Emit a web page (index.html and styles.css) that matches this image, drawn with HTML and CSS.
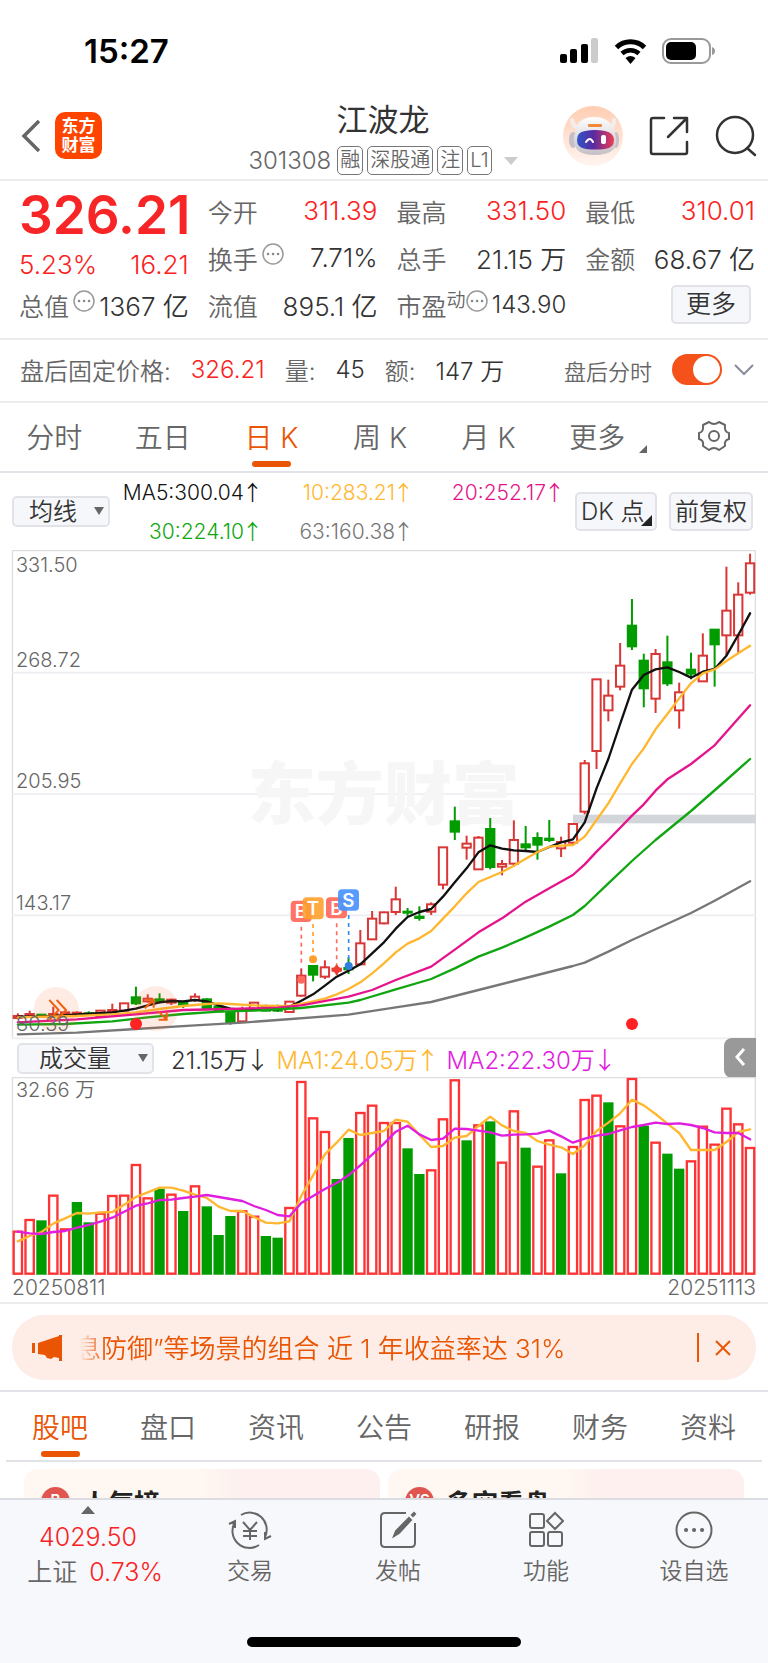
FILE: index.html
```html
<!DOCTYPE html>
<html lang="zh-CN">
<head>
    <meta charset="UTF-8">
    <meta name="viewport" content="width=device-width, initial-scale=1.0">
    <title>江波龙 301308</title>
    <link rel="stylesheet" href="styles.css">
</head>
<body>

    <!-- Status bar -->
    <div class="status-bar">
        <span class="status-time">15:27</span>
        <div class="status-icons">
            <svg width="39" height="26" viewBox="0 0 39 26">
                <rect x="0" y="16" width="7" height="9" rx="2"/>
                <rect x="10" y="11" width="7" height="14" rx="2"/>
                <rect x="21" y="6" width="7" height="19" rx="2"/>
                <rect x="31" y="0" width="7" height="25" rx="2" fill="#ccc"/>
            </svg>
            <svg width="33" height="25" viewBox="0 0 33 25">
                <path d="M2.500 8.500a20 20 0 0 1 28 0" fill="none" stroke="#000" stroke-width="5"/>
                <path d="M8 14.500a12.500 12.500 0 0 1 17 0" fill="none" stroke="#000" stroke-width="4.500"/>
                <path d="M11.500 19q5-4 10 0l-5 6z"/>
            </svg>
            <svg width="54" height="26" viewBox="0 0 54 26">
                <rect x="1" y="1" width="47" height="24" rx="8" fill="none" stroke="#999" stroke-width="2"/>
                <rect x="4" y="4" width="30" height="18" rx="5"/>
                <path d="M50 9q3 1 3 4t-3 4z" fill="#999"/>
            </svg>
        </div>
    </div>

    <!-- Header -->
    <header class="header">
        <div class="header-left">
            <button class="icon-btn" aria-label="返回">
                <svg width="20" height="34" viewBox="0 0 20 34"><path d="M18 2L3 17l15 15" fill="none" stroke="#666" stroke-width="3.500"/></svg>
            </button>
            <a href="#" class="logo"><span>东方</span><span>财富</span></a>
        </div>
        <div class="header-title">
            <h1>江波龙</h1>
            <div class="stock-meta">
                <span class="stock-code">301308</span>
                <span class="tag">融</span>
                <span class="tag">深股通</span>
                <span class="tag">注</span>
                <span class="tag">L1</span>
                <i class="caret"></i>
            </div>
        </div>
        <div class="header-right">
            <button class="icon-btn" aria-label="智能助手">
                <svg width="60" height="60" viewBox="0 0 60 60">
                    <defs>
                        <linearGradient id="halo" x1="0" y1="0" x2="0" y2="1"><stop offset="0" stop-color="#ffcdb2"/><stop offset="1" stop-color="#fff5f0"/></linearGradient>
                        <linearGradient id="visor" x1="0" y1="0" x2="1" y2="0"><stop offset="0" stop-color="#2f55c8"/><stop offset=".45" stop-color="#5b2aa0"/><stop offset="1" stop-color="#ee3d53"/></linearGradient>
                        <linearGradient id="shell" x1="0" y1="0" x2="0" y2="1"><stop offset="0" stop-color="#fff"/><stop offset="1" stop-color="#c4bfc5"/></linearGradient>
                    </defs>
                    <circle cx="30" cy="30" r="30" fill="url(#halo)"/>
                    <path d="M9 14q1 7 7 8M51 14q0 7-5 9" fill="none" stroke="#f3eeee" stroke-width="4" stroke-linecap="round"/>
                    <ellipse cx="10" cy="34" rx="4" ry="8" fill="#c5c0c8"/>
                    <ellipse cx="53" cy="34" rx="3" ry="8" fill="#c5c0c8"/>
                    <path d="M12 27q2-16 19-16t21 16q3 10-1 16-6 6-20 6t-18-7q-4-7-1-15z" fill="url(#shell)"/>
                    <path d="M22 25q10-2 20 0 9 2 9 9 0 8-9 9-10 1-19 0-9-1-9-9 0-8 8-9z" fill="url(#visor)"/>
                    <rect x="25" y="18" width="14" height="3" rx="1" fill="#f08a3c"/>
                    <path d="M23 36q4-6 7 0" fill="none" stroke="#fff" stroke-width="2" stroke-linecap="round"/>
                    <rect x="38" y="29" width="5" height="9" rx="2" fill="#fff"/>
                </svg>
            </button>
            <button class="icon-btn" aria-label="分享">
                <svg width="40" height="40" viewBox="0 0 40 40" fill="none" stroke="#333" stroke-width="2.500" stroke-linecap="round" stroke-linejoin="round"><path d="M15 2H4q-2 0-2 2v32q0 2 2 2h32q2 0 2-2V26M25 2h13v14M38 2L19 21"/></svg>
            </button>
            <button class="icon-btn" aria-label="搜索">
                <svg width="42" height="42" viewBox="0 0 42 42" fill="none" stroke="#333" stroke-width="2.500" stroke-linecap="round"><circle cx="20" cy="20" r="18"/><path d="M32 33l8 7"/></svg>
            </button>
        </div>
    </header>

    <main class="content">
        <!-- Quote -->
        <section class="quote">
            <div class="quote-main">
                <strong class="price">326.21</strong>
                <div class="pair change up"><span>5.23%</span><span>16.21</span></div>
                <div class="pair"><span class="label">总值<svg class="dots" viewBox="0 0 22 22"><use href="#dots"/></svg></span><span>1367 亿</span></div>
            </div>
            <div class="quote-col">
                <div class="pair"><span class="label">今开</span><span class="up">311.39</span></div>
                <div class="pair"><span class="label">换手<svg class="dots" viewBox="0 0 22 22"><use href="#dots"/></svg></span><span>7.71%</span></div>
                <div class="pair"><span class="label">流值</span><span>895.1 亿</span></div>
            </div>
            <div class="quote-col">
                <div class="pair"><span class="label">最高</span><span class="up">331.50</span></div>
                <div class="pair"><span class="label">总手</span><span>21.15 万</span></div>
                <div class="pair"><span class="label">市盈<sup>动</sup><svg class="dots tight" viewBox="0 0 22 22"><use href="#dots"/></svg></span><span class="pe">143.90</span></div>
            </div>
            <div class="quote-col">
                <div class="pair"><span class="label">最低</span><span class="up">310.01</span></div>
                <div class="pair"><span class="label">金额</span><span>68.67 亿</span></div>
                <div class="pair end"><button class="box-btn more-btn">更多</button></div>
            </div>
        </section>

        <!-- After-hours price -->
        <section class="after-hours">
            <span class="label">盘后固定价格:</span><span class="up">326.21</span>
            <span class="label">量:</span><span>45</span>
            <span class="label">额:</span><span>147 万</span>
            <label class="label switch-label" for="after-switch">盘后分时</label>
            <input type="checkbox" id="after-switch" class="switch" checked>
            <button class="icon-btn" aria-label="展开">
                <svg width="20" height="12" viewBox="0 0 20 12"><path d="M1 1l9 9 9-9" fill="none" stroke="#8a8d99" stroke-width="2"/></svg>
            </button>
        </section>

        <!-- Period tabs -->
        <nav class="tabs period-tabs">
            <a href="#">分时</a>
            <a href="#">五日</a>
            <a href="#" class="active">日 K</a>
            <a href="#">周 K</a>
            <a href="#">月 K</a>
            <a href="#" class="has-corner">更多</a>
            <button class="icon-btn" aria-label="设置">
                <svg width="32" height="32" viewBox="0 0 32 32" fill="none" stroke="#666" stroke-width="2" stroke-linejoin="round"><path d="M11 2q5 4 10 0l6 3q-1 7 4 8v6q-5 1-4 7l-6 4q-5-4-10 0l-6-4q1-6-4-7v-6q5-1 4-8z"/><circle cx="16" cy="16" r="5"/></svg>
            </button>
        </nav>

        <!-- Moving averages -->
        <div class="ma-bar">
            <span class="select-wrap"><select class="select" aria-label="主图指标"><option>均线</option></select></span>
            <div class="ma-values">
                <span class="ma5">MA5:300.04<i>↑</i></span>
                <span class="ma10">10:283.21<i>↑</i></span>
                <span class="ma20">20:252.17<i>↑</i></span>
                <span class="ma30">30:224.10<i>↑</i></span>
                <span class="ma63">63:160.38<i>↑</i></span>
            </div>
            <button class="box-btn dk-btn">DK 点</button>
            <button class="box-btn">前复权</button>
        </div>

        <!-- Candlestick chart -->
        <svg class="chart price-chart" id="price-chart" viewBox="0 0 2232 1467">
            <path class="frame" d="M1.500 1467V2H2230V1467"/>
            <path class="grid-line" d="M0 368H2232M0 732H2232M0 1096H2232M0 1465H2232"/>
            <text class="watermark" x="1115" y="808">东方财富</text>
            <rect x="1683" y="794" width="549" height="26" fill="#d2d6db"/>
            <g id="candles"></g>
            <g id="price-lines"></g>
            <circle cx="133" cy="1379" r="68" fill="#f97030" opacity=".13"/>
            <circle cx="432" cy="1376" r="68" fill="#f97030" opacity=".13"/>
            <path class="hint" d="M112 1350l28 30-28 30M134 1350l28 30-28 30"/>
            <path class="hint" d="M425 1371v-24h-24M426 1347l-28 26M464 1385v22h-24M464 1407l-24-24" transform="translate(0 2)"/>
            <circle cx="372" cy="1422" r="18" fill="#f22"/>
            <circle cx="1860" cy="1422" r="18" fill="#f22"/>
            <g class="trades">
                <path d="M868 1130V1245M974 1120V1250" stroke="#ff6a5c"/>
                <path d="M903 1122V1215" stroke="#ffa02e"/>
                <path d="M1010 1095V1235" stroke="#3b8cf5"/>
                <circle cx="868" cy="1289" r="12" fill="#ff6a5c"/>
                <circle cx="903" cy="1228" r="12" fill="#ffa02e"/>
                <path class="mark" d="M974 1244l15 15-15 15-15-15z" fill="#f23b30"/>
                <circle cx="1010" cy="1248" r="12" fill="#2f80dd"/>
                <rect x="836" y="1052" width="63" height="64" rx="12" fill="#ff7465"/><text x="867" y="1104">B</text>
                <rect x="872" y="1042" width="63" height="66" rx="12" fill="#ffa02e" opacity=".9"/><text x="903" y="1095">T</text>
                <rect x="942" y="1042" width="63" height="63" rx="12" fill="#ff7465"/><text x="973" y="1094">B</text>
                <rect x="978" y="1018" width="63" height="64" rx="12" fill="#4a94ff" opacity=".92"/><text x="1009" y="1070">S</text>
            </g>
            <g class="axis">
                <text x="12" y="67">331.50</text>
                <text x="12" y="350">268.72</text>
                <text x="12" y="715">205.95</text>
                <text x="12" y="1079">143.17</text>
                <text x="12" y="1444">80.39</text>
            </g>
        </svg>

        <!-- Volume -->
        <div class="volume-bar">
            <span class="select-wrap wide"><select class="select" aria-label="副图指标"><option>成交量</option></select></span>
            <span>21.15万<i>↓</i></span>
            <span class="ma10">MA1:24.05万<i>↑</i></span>
            <span class="vol-ma2">MA2:22.30万<i>↓</i></span>
            <button class="collapse" aria-label="收起">
                <svg width="12" height="20" viewBox="0 0 12 20"><path d="M10 2L3 10l7 8" fill="none" stroke="#fff" stroke-width="3"/></svg>
            </button>
        </div>
        <svg class="chart" id="volume-chart" viewBox="0 0 2232 594">
            <path class="frame" d="M1.500 592V2H2230V592Z"/>
            <g id="bars"></g>
            <g id="volume-lines"></g>
            <g class="axis"><text x="12" y="60">32.66 万</text></g>
        </svg>
        <div class="dates"><span>20250811</span><span>20251113</span></div>

        <!-- Notice -->
        <div class="notice-wrap">
            <div class="notice">
                <svg width="31" height="26" viewBox="0 0 31 26" fill="#ea5504"><path d="M0 8h3v10H0zM6 8L27 1V0h3v26h-3v-3l-5-1-3 2-4-1-2-3-7-1z"/></svg>
                <p>息防御”等场景的组合 近 1 年收益率达 31%</p>
                <button class="icon-btn" aria-label="关闭">
                    <svg width="16" height="16" viewBox="0 0 16 16"><path d="M1 1l14 14M15 1L1 15" stroke="#ea5504" stroke-width="2"/></svg>
                </button>
            </div>
        </div>

        <!-- Info tabs -->
        <nav class="tabs info-tabs">
            <a href="#" class="active">股吧</a>
            <a href="#">盘口</a>
            <a href="#">资讯</a>
            <a href="#">公告</a>
            <a href="#">研报</a>
            <a href="#">财务</a>
            <a href="#">资料</a>
        </nav>
        <div class="cards">
            <a href="#" class="card"><span class="badge">B</span>人气榜 ›</a>
            <a href="#" class="card"><span class="badge">VS</span>多空看盘</a>
        </div>
    </main>

    <!-- Bottom bar -->
    <footer class="bottom">
        <nav class="bottom-nav">
            <a href="#" class="index-link">
                <i class="up-caret"></i>
                <span class="up">4029.50</span>
                <span class="index-row">上证<b class="up">0.73%</b></span>
            </a>
            <a href="#" class="nav-item">
                <svg width="44" height="38" viewBox="0 0 44 38"><path d="M13 4A17 17 0 0 1 37 26M31 34A17 17 0 0 1 7 11M1 13l6-3v7M43 25l-6 3v-7M15 11l7 8 7-8M22 19v10M15 20h14M15 25h14"/></svg>
                交易
            </a>
            <a href="#" class="nav-item">
                <svg width="38" height="38" viewBox="0 0 38 38"><path d="M27 2H6Q2 2 2 6v26q0 4 4 4h26q4 0 4-4V12"/><path d="M15 25l2-5L30 7l2 2-12 13zM33 4l2-2 1 1-2 2z" fill="#666"/></svg>
                发帖
            </a>
            <a href="#" class="nav-item">
                <svg width="36" height="38" viewBox="0 0 36 38"><rect x="2" y="3" width="14" height="14" rx="2"/><path d="M27 2l8 8-8 8-8-8z"/><rect x="2" y="21" width="14" height="14" rx="2"/><rect x="20" y="21" width="14" height="14" rx="2"/></svg>
                功能
            </a>
            <a href="#" class="nav-item">
                <svg width="38" height="38" viewBox="0 0 38 38"><circle cx="19" cy="19" r="17.500"/><path d="M11 19h.1M19 19h.1M27 19h.1" stroke-width="4" stroke-linecap="round"/></svg>
                设自选
            </a>
        </nav>
        <div class="home-indicator"></div>
    </footer>

    <svg class="defs">
        <g id="dots"><circle cx="11" cy="11" r="10" fill="none" stroke="#999" stroke-width="1.500"/><path d="M6 11h.1M11 11h.1M16 11h.1" stroke="#888" stroke-width="2.500" stroke-linecap="round"/></g>
    </svg>

    <script src="chart.js"></script>
</body>
</html>
```
FILE: styles.css
```css
* {
    box-sizing: border-box;
}

body {
    margin: 0;
    height: 100vh;
    display: flex;
    flex-direction: column;
    background: #fff;
    color: #333;
    font-family: Inter, "Noto Sans CJK SC", sans-serif;
    font-weight: 350;
    font-size: 24px;
}

a {
    color: inherit;
    text-decoration: none;
}

button {
    font: inherit;
    color: inherit;
    padding: 0;
    cursor: pointer;
}

i {
    font-style: normal;
}

.icon-btn {
    display: flex;
    align-items: center;
    justify-content: center;
    border: none;
    background: none;
}

.defs {
    display: none;
}

.up {
    color: #fa2222;
}

.label {
    color: #666;
}

/* Status bar */
.status-bar {
    height: 92px;
    padding: 10px 52px 0 84px;
    display: flex;
    align-items: center;
    justify-content: space-between;
    flex-shrink: 0;
}

.status-time {
    color: #000;
    font-size: 33px;
    font-weight: 600;
}

.status-icons {
    display: flex;
    align-items: center;
    gap: 15px;
}

/* Header */
.header {
    height: 89px;
    padding: 0 11px 0 21px;
    display: grid;
    grid-template-columns: 1fr auto 1fr;
    align-items: center;
    border-bottom: 2px solid #ececec;
    flex-shrink: 0;
}

.header-left,
.header-right {
    display: flex;
    align-items: center;
    gap: 14px;
}

.header-right {
    justify-content: flex-end;
    gap: 26px;
}

.logo {
    width: 47px;
    height: 47px;
    border-radius: 10px;
    background: #ff4400;
    color: #fff;
    display: flex;
    flex-direction: column;
    align-items: center;
    justify-content: center;
    font-size: 17px;
    line-height: 19px;
    font-weight: 700;
}

.header-title {
    text-align: center;
    padding: 4px 12px 0 0;
}

.header-title h1 {
    margin: 0;
    font-size: 31px;
    line-height: 44px;
    font-weight: 400;
}

.stock-meta {
    display: flex;
    align-items: center;
    gap: 4px;
    margin-top: 2px;
    line-height: 34px;
    color: #666;
}

.stock-code {
    font-size: 24px;
    margin-right: 2px;
}

.tag {
    border: 1px solid #777;
    border-radius: 5px;
    padding: 0 2px;
    font-size: 20px;
    line-height: 27px;
}

.caret {
    margin-left: 8px;
    border: 7px solid transparent;
    border-top: 8px solid #ccc;
    border-bottom: none;
}

/* Main */
.content {
    flex: 1;
    min-height: 0;
    overflow: hidden;
}

.quote {
    height: 159px;
    padding: 6px 13px 8px 19px;
    display: grid;
    grid-template-columns: repeat(4, minmax(0, 1fr));
    gap: 19px;
    border-bottom: 2px solid #ececec;
    font-size: 26px;
}

.pair {
    display: flex;
    align-items: center;
    justify-content: space-between;
    height: 47px;
    white-space: nowrap;
}

.pair .label {
    font-size: 25px;
}

.pair.end {
    justify-content: flex-end;
}

.price {
    display: block;
    height: 60px;
    line-height: 57px;
    font-size: 53px;
    font-weight: 600;
    color: #f72525;
}

.pair.change {
    height: 34px;
}

.dots {
    width: 22px;
    height: 22px;
    margin-left: 4px;
    vertical-align: 4px;
}

.dots.tight {
    margin-left: 0;
}

.label sup {
    font-size: 19px;
    line-height: 19px;
}

.pe {
    font-size: 24px;
}

.box-btn {
    height: 39px;
    padding: 0 4px;
    border: 2px solid #e2e3e9;
    border-radius: 5px;
    background: #f6f7fa;
    white-space: nowrap;
}

.more-btn {
    width: 80px;
    margin-right: 4px;
    font-size: 25px;
    line-height: 33px;
}

/* After-hours row */
.after-hours {
    height: 63px;
    padding: 0 14px 2px 20px;
    display: flex;
    align-items: center;
    gap: 20px;
    border-bottom: 2px solid #ececec;
    font-size: 24px;
    white-space: nowrap;
}

.switch-label {
    margin-left: auto;
    font-size: 22px;
}

.switch {
    appearance: none;
    width: 50px;
    height: 31px;
    margin: 0;
    border-radius: 16px;
    background: #ccc;
    display: flex;
    align-items: center;
    padding: 2px;
}

.switch::before {
    content: "";
    width: 27px;
    height: 27px;
    border-radius: 50%;
    background: #fff;
}

.switch:checked {
    background: #f5511a;
    justify-content: flex-end;
}

.after-hours .icon-btn {
    margin-left: -8px;
}

/* Tabs */
.tabs {
    height: 70px;
    display: flex;
    border-bottom: 2px solid #e2e3e9;
    color: #666;
    font-size: 28px;
}

.tabs > * {
    flex: 1;
    display: flex;
    align-items: center;
    justify-content: center;
    position: relative;
}

.period-tabs > * {
    padding-bottom: 2px;
}

.tabs .active {
    color: #ea5504;
}

.tabs .active::after {
    content: "";
    position: absolute;
    bottom: 4px;
    width: 39px;
    height: 6px;
    border-radius: 3px;
    background: #ea5504;
}

.has-corner::after {
    content: "";
    position: absolute;
    right: 12px;
    bottom: 18px;
    border-left: 8px solid transparent;
    border-bottom: 8px solid #666;
}

.period-tabs .has-corner {
    padding-right: 8px;
}

/* Indicators */
.ma-bar {
    height: 77px;
    padding: 0 15px 0 12px;
    display: flex;
    align-items: center;
    gap: 12px;
}

.select-wrap {
    position: relative;
    width: 98px;
    height: 31px;
    flex-shrink: 0;
}

.select-wrap::after {
    content: "";
    position: absolute;
    right: 6px;
    top: 11px;
    border: 5px solid transparent;
    border-top: 8px solid #666;
    border-bottom: none;
}

.select-wrap.wide {
    width: 137px;
    margin-right: 5px;
}

.select {
    appearance: none;
    width: 100%;
    height: 100%;
    padding: 0 0 0 15px;
    border: 2px solid #e2e3e9;
    border-radius: 5px;
    background: #f6f7fa;
    color: #333;
    font: inherit;
    font-size: 24px;
    line-height: 27px;
}

.wide .select {
    padding-left: 20px;
}

.ma-values {
    flex: 1;
    display: grid;
    grid-template-columns: 139px 1fr 1fr;
    row-gap: 9px;
    text-align: right;
    font-size: 21px;
    line-height: 28px;
    white-space: nowrap;
}

.ma-values i,
.volume-bar i {
    font-family: "Noto Sans CJK SC", sans-serif;
    display: inline-block;
    width: 17px;
    text-indent: -2px;
}

.ma5 {
    color: #111;
}

.ma10 {
    color: #ffb72f;
}

.ma20 {
    color: #e5148c;
}

.ma30 {
    color: #11a611;
}

.ma63 {
    color: #777;
}

.ma-bar .box-btn {
    font-size: 24px;
    line-height: 33px;
}

.dk-btn {
    position: relative;
    width: 82px;
    text-align: left;
}

.dk-btn::after {
    content: "";
    position: absolute;
    right: 3px;
    bottom: 3px;
    border-left: 11px solid transparent;
    border-bottom: 11px solid #222;
}

/* Charts */
.chart {
    display: block;
    width: calc(100% - 24px);
    margin: 0 12px;
    overflow: visible;
}

.frame {
    fill: none;
    stroke: #dddde2;
    stroke-width: 4;
}

.grid-line {
    stroke: #ededf2;
    stroke-width: 5;
}

.watermark {
    font-size: 204px;
    font-weight: 900;
    text-anchor: middle;
    fill: #f6f6f6;
}

.axis {
    font-size: 60px;
    fill: #666;
}

.line {
    fill: none;
    stroke-width: 7;
    stroke-linejoin: round;
    stroke-linecap: round;
}

.rise {
    fill: #fff;
    stroke: #d93636;
    stroke-width: 6;
}

.fall {
    fill: #009c00;
    stroke: #009c00;
    stroke-width: 6;
}

#bars .rise {
    stroke: #f33;
    stroke-width: 7;
}

.hint {
    fill: none;
    stroke: #f06010;
    stroke-width: 6;
}

.trades path {
    stroke-width: 5;
    stroke-dasharray: 12 12;
}

.trades .mark {
    stroke: none;
}

.trades text {
    fill: #fff;
    font-size: 56px;
    font-weight: 600;
    text-anchor: middle;
}

.volume-bar {
    height: 38px;
    margin-right: 12px;
    padding-left: 17px;
    display: flex;
    align-items: center;
    gap: 12px;
    font-size: 24px;
    white-space: nowrap;
}

.vol-ma2 {
    color: #e01ee0;
}

.collapse {
    width: 32px;
    height: 40px;
    margin-left: auto;
    border: none;
    border-radius: 8px 0 0 8px;
    background: #999;
}

.dates {
    height: 29px;
    padding: 0 12px;
    display: flex;
    justify-content: space-between;
    border-bottom: 2px solid #ececec;
    color: #666;
    font-size: 21px;
    line-height: 26px;
}

/* Notice */
.notice-wrap {
    padding: 11px 12px 10px;
    border-bottom: 2px solid #e2e3e9;
}

.notice {
    height: 65px;
    padding: 0 25px 0 20px;
    display: flex;
    align-items: center;
    gap: 12px;
    border-radius: 32px;
    background: #fdede6;
    color: #ea5504;
}

.notice p {
    flex: 1;
    margin: 0;
    padding-bottom: 3px;
    font-size: 26px;
    white-space: nowrap;
    overflow: hidden;
    mask-image: linear-gradient(90deg, transparent 5px, #000 30px);
}

.notice .icon-btn {
    height: 29px;
    padding-left: 16px;
    border-left: 2px solid #ea5504;
}

.info-tabs {
    margin: 0 6px;
}

.info-tabs .active::after {
    bottom: 3px;
}

.cards {
    padding: 7px 24px 0;
    display: grid;
    grid-template-columns: 1fr 1fr;
    gap: 8px;
}

.card {
    height: 110px;
    padding: 18px 17px;
    display: flex;
    align-items: flex-start;
    gap: 12px;
    border-radius: 14px;
    background: linear-gradient(90deg, #fff7f2 50%, #fdf0ee 60%);
    color: #222;
    font-size: 26px;
    line-height: 34px;
    font-weight: 600;
}

.badge {
    width: 29px;
    height: 29px;
    border-radius: 50%;
    background: #e05550;
    color: #fff;
    font-size: 15px;
    line-height: 26px;
    text-align: center;
}

/* Bottom bar */
.bottom {
    position: relative;
    height: 165px;
    flex-shrink: 0;
    padding: 6px 0 16px;
    display: flex;
    flex-direction: column;
    align-items: center;
    justify-content: space-between;
    border-top: 2px solid #dcdde3;
    background: #f7f8fb;
    color: #666;
}

.bottom-nav {
    width: 100%;
    display: flex;
}

.index-link {
    width: 176px;
    display: flex;
    flex-direction: column;
    align-items: center;
    font-size: 25px;
    line-height: 35px;
    white-space: nowrap;
}

.index-row {
    padding-left: 14px;
}

.index-row b {
    margin-left: 12px;
    font-weight: 350;
}

.up-caret {
    border: 7px solid transparent;
    border-bottom: 8px solid #666;
    border-top: none;
    margin-bottom: 6px;
}

.nav-item {
    flex: 1;
    display: flex;
    flex-direction: column;
    align-items: center;
    gap: 5px;
    padding-top: 5px;
    font-size: 23px;
    line-height: 34px;
}

.nav-item svg {
    fill: none;
    stroke: #666;
    stroke-width: 2;
}

.home-indicator {
    width: 274px;
    height: 10px;
    border-radius: 5px;
    background: #000;
}
```
FILE: chart.js
```js
// one slot per trading day
const FIRST = 17.5;
const STEP = 35.43;
const SVG = 'http://www.w3.org/2000/svg';

// [high, body top, body bottom, low, falling]
const candles = [
    [700,708,714,718,0],[692,702,708,712,0],[702,704,708,710,1],[680,702,706,710,0],[694,697,703,708,0],
    [694,698,703,706,0],[694,700,704,708,1],[690,692,708,713,0],[671,690,696,696,0],[670,670,692,692,0],
    [620,652,670,675,1],[643,656,664,668,0],[640,658,663,670,1],[656,659,668,675,0],[663,666,674,684,1],
    [640,650,660,665,0],[655,658,684,686,1],[674,680,694,696,1],[694,697,726,734,1],[680,690,724,726,0],
    [667,668,690,692,0],[674,678,692,694,1],[674,688,692,696,1],[663,665,696,698,0],[565,587,647,650,0],
    [555,558,584,604,1],[541,562,590,597,0],[555,566,572,585,0],[532,564,568,582,1],[450,490,553,553,0],
    [393,416,478,480,0],[395,397,430,433,0],[320,358,396,405,0],[384,395,398,408,1],[379,410,414,422,1],
    [367,373,395,405,0],[202,202,314,328,0],[80,124,155,180,1],[167,191,203,239,0],[168,173,268,268,0],
    [114,147,261,268,1],[240,252,260,286,0],[121,180,251,260,0],[138,193,202,210,1],[157,174,194,239,1],
    [120,176,180,186,1],[170,186,205,231,0],[132,132,188,198,0],[-60,-50,95,103,0],[-302,-302,-87,-33,0],
    [-301,-253,-209,-176,0],[-411,-343,-280,-269,0],[-543,-463,-401,-390,1],[-379,-358,-275,-218,1],
    [-393,-378,-244,-201,0],[-433,-353,-290,-282,1],[-292,-263,-209,-154,0],[-382,-331,-319,-302,1],
    [-440,-373,-296,-296,0],[-452,-451,-407,-280,1],[-640,-508,-434,-373,0],[-593,-556,-434,-382,0],
    [-679,-650,-562,-556,0]
];

// top of each volume bar
const volumes = [
    587,552,556,479,580,501,562,533,480,479,387,487,461,476,528,451,514,600,543,526,542,603,608,516,138,247,
    288,432,309,231,209,261,261,340,417,403,250,133,316,268,259,380,226,338,392,313,415,333,192,179,202,271,
    129,272,320,356,401,376,272,326,218,265,336
];
const greenBars = [2,5,6,12,14,16,17,18,21,22,27,28,33,34,38,40,43,46,50,53,55,56];

// average lines as [day, y]
const priceLines = {
    '#111': [[0,710],[2,710],[5,703],[8,697],[9,692],[10,686],[11,676],[12,667],[13,663],[14,664],[15,660],[16,664],[17,676],[18,686],[19,690],[20,688],[22,688],[23,680],[24,662],[25,643],[26,617],[27,590],[28,572],[29,553],[30,520],[31,487],[32,446],[33,411],[34,396],[35,387],[36,350],[37,307],[38,265],[39,217],[40,196],[41,206],[42,211],[43,213],[44,216],[45,201],[46,187],[47,178],[48,127],[49,25],[50,-63],[51,-168],[52,-271],[53,-315],[54,-332],[55,-338],[56,-324],[57,-307],[58,-325],[59,-333],[60,-373],[61,-435],[62,-500]],
    '#ffb72f': [[0,712],[5,708],[8,703],[10,697],[12,687],[14,678],[16,672],[17,670],[18,672],[20,676],[22,678],[23,678],[24,672],[25,664],[26,656],[27,643],[28,627],[29,607],[30,580],[31,550],[32,517],[33,491],[34,475],[35,453],[36,416],[37,379],[38,340],[39,306],[40,291],[41,276],[42,257],[43,236],[44,216],[45,200],[46,197],[47,195],[48,170],[49,120],[50,70],[51,10],[52,-48],[53,-95],[54,-152],[55,-198],[56,-245],[57,-290],[58,-320],[59,-332],[60,-357],[61,-380],[62,-403]],
    '#e5148c': [[0,727],[5,718],[10,703],[14,690],[18,687],[22,683],[24,676],[28,650],[30,630],[32,600],[35,560],[37,509],[39,457],[41,415],[43,365],[45,325],[47,285],[48,253],[49,215],[50,180],[52,107],[53,73],[54,32],[55,-2],[57,-48],[59,-104],[62,-224]],
    '#11a611': [[0,734],[4,732],[8,724],[11,712],[14,702],[17,695],[20,692],[24,684],[28,668],[29,660],[32,628],[35,597],[37,565],[39,530],[41,503],[43,472],[45,440],[47,405],[48,378],[50,310],[52,243],[54,180],[57,93],[60,0],[62,-63]],
    '#777': [[0,763],[5,758],[10,747],[15,736],[19,728],[22,720],[28,704],[32,682],[35,666],[39,630],[42,603],[47,558],[48,548],[50,515],[52,480],[57,399],[59,362],[62,304]]
};

const volumeLines = {
    '#ffb72f': [618,602,590,565,549,533,535,531,530,508,485,471,457,457,466,478,488,514,527,527,545,562,564,558,482,420,357,322,283,299,293,287,253,259,298,335,332,307,302,272,244,270,287,293,317,328,336,356,330,287,262,234,193,210,236,265,293,344,344,344,320,290,282],
    '#e01ee0': [589,594,596,590,587,577,569,559,547,529,511,504,494,493,488,484,479,485,491,497,512,524,539,543,503,482,461,443,420,390,358,325,289,271,297,314,310,280,281,286,291,301,298,297,295,286,303,322,310,301,296,285,275,269,262,266,264,269,278,291,293,293,312]
};

function add(parent, tag, attrs) {
    const el = document.createElementNS(SVG, tag);
    for (const name in attrs) el.setAttribute(name, attrs[name]);
    document.getElementById(parent).appendChild(el);
}

function x(day) {
    return FIRST + day * STEP;
}

function drawLine(parent, color, points, shift) {
    add(parent, 'polyline', {
        class: 'line',
        stroke: color,
        points: points.map(p => x(p[0]).toFixed(1) + ',' + (p[1] + shift)).join(' ')
    });
}

candles.forEach(function (c, day) {
    const type = c[4] ? 'fall' : 'rise';
    const [high, top, bottom, low] = c.slice(0, 4).map(v => v + 690);
    add('candles', 'path', { class: type, d: `M${x(day)} ${high}V${low}` });
    add('candles', 'rect', { class: type, x: x(day) - 12.5, y: top, width: 25, height: bottom - top });
});

volumes.forEach(function (top, day) {
    const type = greenBars.includes(day) ? 'fall' : 'rise';
    add('bars', 'rect', { class: type, x: x(day) - 12.5, y: top - 123, width: 25, height: 713 - top });
});

for (const color in priceLines) drawLine('price-lines', color, priceLines[color], 690);
for (const color in volumeLines) drawLine('volume-lines', color, volumeLines[color].map((v, i) => [i, v]), -125);
```
